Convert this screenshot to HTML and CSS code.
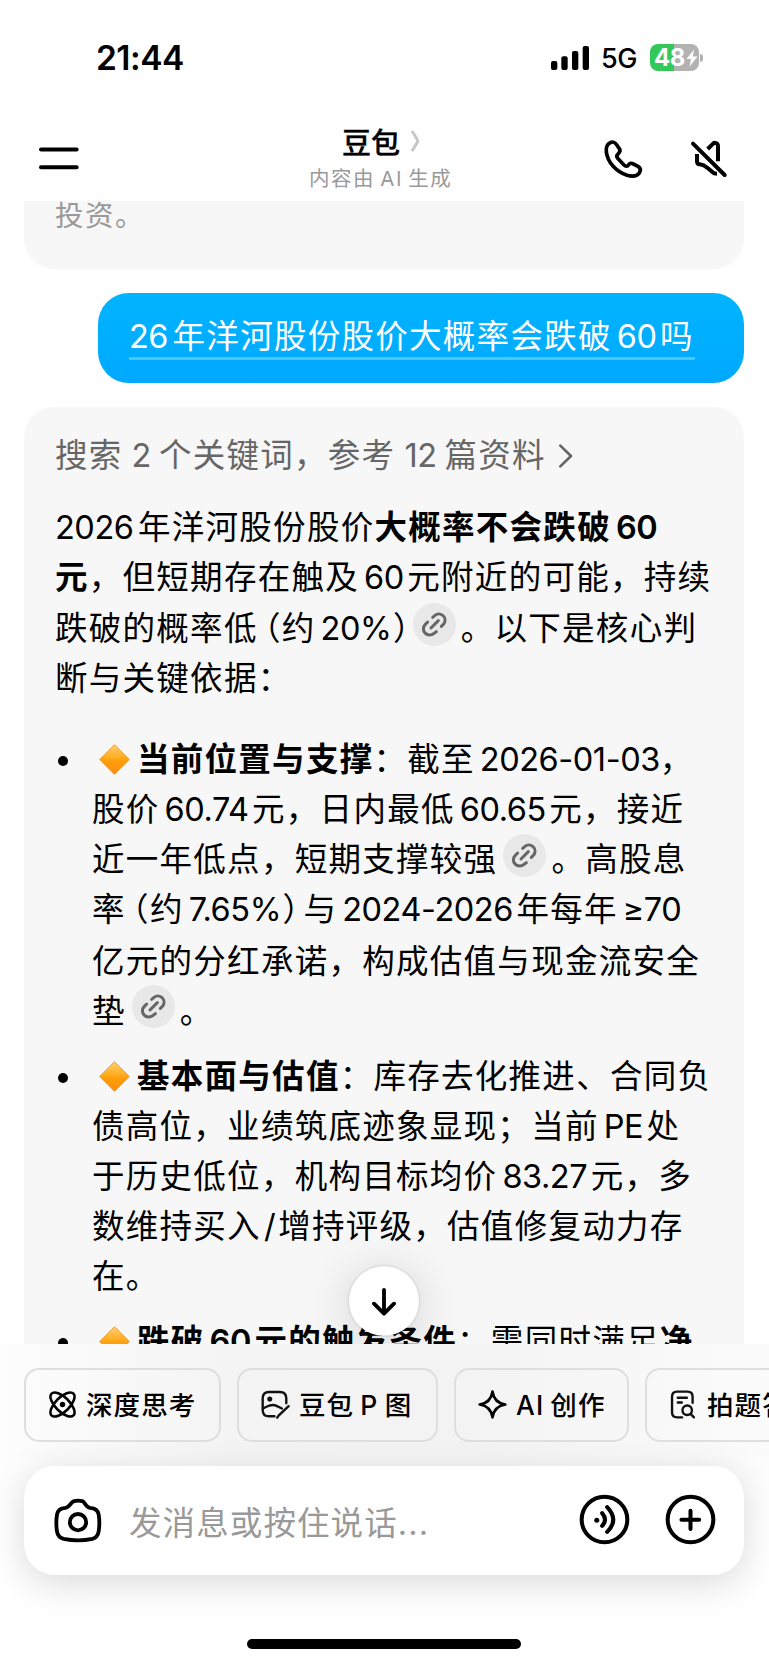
FILE: index.html
```html
<!DOCTYPE html>
<html lang="zh-CN">
<head>
<meta charset="utf-8">
<title>豆包</title>
<link rel="stylesheet" href="styles.css">
</head>
<body>
<svg class="defs" width="0" height="0" aria-hidden="true">
  <defs>
    <linearGradient id="amber" x1="0" y1="0" x2="0" y2="1">
      <stop offset="0" stop-color="#ffd071"/><stop offset=".45" stop-color="#ffab1e"/><stop offset=".55" stop-color="#ff9f0a"/><stop offset="1" stop-color="#ff8a0c"/>
    </linearGradient>
    <symbol id="diamond" viewBox="0 0 92 92"><path d="M46 2 90 46 46 90 2 46Z" fill="url(#amber)" stroke="#e8912a" stroke-width="2.5" stroke-linejoin="round"/></symbol>
    <symbol id="link" viewBox="0 0 129 129">
      <g fill="none" stroke="#666" stroke-width="9" stroke-linecap="round">
        <path d="M54 75 76 53"/>
        <path d="M59 43 66 37A18.500 18.500 0 0 1 92 63L85 70"/>
        <path d="M44 57 37 64A18.500 18.500 0 0 0 63 91L70 86"/>
      </g>
    </symbol>
  </defs>
</svg>
<div class="screen">
  <header class="top">
    <div class="status">
      <span class="time">21:44</span>
      <div class="signals">
        <svg class="bars" viewBox="0 0 114 72"><rect x="0" y="45" width="19" height="27" rx="6"/><rect x="31" y="31" width="19" height="41" rx="6"/><rect x="63" y="15" width="19" height="57" rx="6"/><rect x="95" y="0" width="19" height="72" rx="6"/></svg>
        <span class="net">5G</span>
        <div class="battery"><span>48</span><svg viewBox="0 0 34 50"><path d="M23 1 1 28H14L10 49 33 21H19Z" fill="#fff"/></svg></div>
        <i class="nub"></i>
      </div>
    </div>
    <nav class="nav">
      <svg class="menu" viewBox="0 0 119 68"><path d="M6 7H112M6 60H112" stroke="#000" stroke-width="12" stroke-linecap="round"/></svg>
      <div class="title">
        <div class="name">豆包<svg class="tchev" viewBox="0 0 28 66"><path d="M5 5 Q6 6 19 28Q22 33 19 38L5 61" fill="none" stroke="#c8c8c8" stroke-width="9.500" stroke-linecap="round"/></svg></div>
        <div class="sub">内容由 AI 生成</div>
      </div>
      <svg class="call" viewBox="654 414 126 126"><path d="M676 428C683 424 691 428 695 434L703 446C708 453 704 457 700 461C694 466 694 470 698 475L717 495C722 500 727 500 731 494C735 488 739 489 745 492L759 499C767 504 767 512 763 519C756 529 741 530 726 526C694 515 668 488 664 456C662 441 666 433 676 428Z" fill="none" stroke="#000" stroke-width="11" stroke-linejoin="round"/></svg>
      <svg class="mute" viewBox="910 414 126 126"><g fill="none" stroke="#000" stroke-width="12"><path d="M925 431 1020 525" stroke-linecap="round"/><path d="M969 447 983 433C990 425 1000 429 1000 438V484"/><path d="M937 462V484C937 490 940 493 945 493C957 494 963 499 969 504L984 517C988 521 992 521 997 521"/></g></svg>
    </nav>
  </header>

  <main class="chat">
    <section class="card previous"><p class="line">投资。</p></section>
    <div class="bubble"><p class="line"><b class="n">26</b>年洋河股份股价大概率会跌破<b class="n l">60</b>吗</p></div>
    <section class="card answer">
      <p class="line refs">搜索<b class="n r">2</b>个关键词，参考<b class="n r">12</b>篇资料<svg class="chev" viewBox="0 0 42 70"><path d="M4 4 36 35 4 66" fill="none" stroke="#666" stroke-width="8" stroke-linecap="round" stroke-linejoin="round"/></svg></p>
      <div class="para">
        <p class="line"><b class="n">2026</b>年洋河股份股价<strong>大概率不会跌破<b class="n l">60</b></strong></p>
        <p class="line"><strong>元</strong>，但短期存在触及<b class="n l">60</b>元附近的可能，持续</p>
        <p class="line drop">跌破的概率低<i class="po">（</i>约<b class="n l">20%</b><i class="pc">）</i><svg class="chip"><use href="#link"/></svg>。以下是核心判</p>
        <p class="line">断与关键依据：</p>
      </div>
      <ul class="points">
        <li>
          <p class="line"><svg class="gem"><use href="#diamond"/></svg><strong>当前位置与支撑</strong>：截至<b class="n l tight">2026-01-03</b>，</p>
          <p class="line">股价<b class="n l">60.74</b>元，日内最低<b class="n l">60.65</b>元，接近</p>
          <p class="line">近一年低点，短期支撑较强<svg class="chip"><use href="#link"/></svg>。高股息</p>
          <p class="line">率<i class="po">（</i>约<b class="n l">7.65%</b><i class="pc">）</i>与<b class="n l">2024-2026</b>年每年<b class="n l">≥70</b></p>
          <p class="line gap">亿元的分红承诺，构成估值与现金流安全</p>
          <p class="line last">垫<svg class="chip"><use href="#link"/></svg>。</p>
        </li>
        <li>
          <p class="line"><svg class="gem"><use href="#diamond"/></svg><strong>基本面与估值</strong>：库存去化推进、合同负</p>
          <p class="line">债高位，业绩筑底迹象显现；当前<b class="n l">PE</b>处</p>
          <p class="line">于历史低位，机构目标均价<b class="n l">83.27</b>元，多</p>
          <p class="line">数维持买入<b class="n s">/</b>增持评级，估值修复动力存</p>
          <p class="line">在。</p>
        </li>
        <li>
          <p class="line"><svg class="gem"><use href="#diamond"/></svg><strong>跌破<b class="n l">60</b>元的触发条件</strong>：需同时满足<strong>净</strong></p>
        </li>
      </ul>
    </section>
    <button class="down" aria-label="回到底部"><svg viewBox="0 0 72 84"><path d="M36 6V76M6 47 36 77 66 47" fill="none" stroke="#000" stroke-width="11.500" stroke-linecap="round" stroke-linejoin="round"/></svg></button>
  </main>

  <footer class="bottom">
    <div class="tools">
      <div class="tool t1"><svg viewBox="145 152 86 86"><g fill="none" stroke="#000" stroke-width="7.500"><ellipse cx="188" cy="195" rx="46" ry="21" transform="rotate(45 188 195)"/><ellipse cx="188" cy="195" rx="46" ry="21" transform="rotate(-45 188 195)"/></g><circle cx="188" cy="195" r="8"/></svg>深度思考</div>
      <div class="tool t2"><svg viewBox="788 153 86 86"><g fill="none" stroke="#111" stroke-width="7" stroke-linecap="round"><path d="M863 192V178Q863 159 844 159H812Q793 159 793 178V212Q793 231 812 231H828"/><path d="M794 208C808 200 821 193 834 200L850 208"/><path d="M836 235 841 228 870 201"/></g><circle cx="814" cy="180" r="7.500" fill="#111"/></svg>豆包 P 图</div>
      <div class="tool t3"><svg viewBox="283 152 86 86"><path d="M326 157Q331 190 364 195Q331 200 326 233Q321 200 288 195Q321 190 326 157Z" fill="none" stroke="#000" stroke-width="8" stroke-linejoin="round"/></svg>AI 创作</div>
      <div class="tool t4"><svg viewBox="861 152 86 86"><g fill="none" stroke="#111" stroke-width="7" stroke-linecap="round"><path d="M931 190V172Q931 157 916 157H885Q870 157 870 172V218Q870 233 885 233H900"/><path d="M887 175H914M887 189H899"/><circle cx="915" cy="212" r="14"/><path d="M925 223 935 233"/></g></svg>拍题答疑</div>
    </div>
    <div class="composer">
      <svg class="camera" viewBox="160 470 150 140"><g fill="none" stroke="#000" stroke-width="11.500"><path d="M223 482Q235 479 248 482C257 485 257 500 271 502C287 503 295 510 297 522Q301 547 297 573C295 586 289 592 278 595Q235 604 192 595C180 592 174 586 172 573Q168 547 172 522C174 510 182 503 197 502C212 500 212 485 223 482Z"/><circle cx="235" cy="545" r="24.500"/></g></svg>
      <span class="hint">发消息或按住说话...</span>
      <svg class="round" viewBox="580 464 152 152"><g fill="none" stroke="#000" stroke-width="12" stroke-linecap="round"><circle cx="656" cy="540" r="68"/><path d="M649 521Q666 541 649 559M664 503Q700 541 664 577"/></g><circle cx="633" cy="542" r="7.500"/></svg>
      <svg class="round" viewBox="838 464 152 152"><g fill="none" stroke="#000" stroke-width="12" stroke-linecap="round"><circle cx="914" cy="540" r="68"/><path d="M887 541H940M914 514V568"/></g></svg>
    </div>
    <div class="home"></div>
  </footer>
</div>
</body>
</html>
```
FILE: styles.css
```css
* { box-sizing: border-box; margin: 0; padding: 0; }
body { background: #fff; color: #000; font-family: Inter, "Noto Sans CJK SC", sans-serif; }
svg { display: block; flex: none; }
.defs { position: absolute; }
.screen { width: 769px; height: 1665px; display: flex; flex-direction: column; overflow: hidden; }

.top { height: 201px; flex: none; background: #fff; position: relative; }
.status { height: 115px; display: flex; justify-content: space-between; padding: 0 66px 0 96px; align-items: center; }
.time { font-size: 33.500px; font-weight: 600; letter-spacing: -.5px; }
.signals { display: flex; align-items: center; }
.bars { width: 38px; height: 24px; }
.net { font-size: 27px; font-weight: 450; width: 37px; margin-left: 12px; margin-top: 2px; letter-spacing: -.5px; }
.battery { width: 49px; height: 27px; margin-left: 12px; border-radius: 8px; background: linear-gradient(90deg, #34c759 48%, #b2b2b2 48%); display: flex; align-items: center; padding-left: 4px; gap: 1px; color: #fff; font-size: 24px; font-weight: 700; letter-spacing: -.5px; }
.battery svg { width: 12px; height: 18px; }
.nub { width: 3px; height: 8px; margin-left: 1px; background: #b2b2b2; border-radius: 0 3px 3px 0; }

.nav { height: 86px; display: flex; padding: 0 38px 0 39px; }
.menu { width: 40px; height: 23px; margin-top: 32px; }
.title { width: 240px; margin-left: 192px; display: flex; flex-direction: column; }
.name { display: flex; align-items: center; height: 42px; margin-top: 5px; padding-left: 71px; font-size: 29px; font-weight: 500; -webkit-text-stroke: .3px #000; }
.tchev { width: 9px; height: 22px; margin: 0 0 0 11px; }
.sub { height: 30px; line-height: 30px; margin-top: 2px; padding-left: 38px; font-size: 20.500px; letter-spacing: 1.500px; word-spacing: -2px; color: #999; white-space: nowrap; }
.call { width: 42px; height: 42px; margin: 23px 0 0 92px; }
.mute { width: 42px; height: 42px; margin: 23px 0 0 43px; }

.chat { height: 1143px; flex: none; overflow: hidden; position: relative; padding: 0 25px 0 24px; }
.card { background: #f7f7f7; }
.line { height: 50px; line-height: 50px; font-size: 32.500px; letter-spacing: 1.280px; white-space: nowrap; display: flex; align-items: center; }
.line strong { font-weight: 600; display: flex; align-items: center; }
.line .n { font-weight: inherit; letter-spacing: -.45px; margin-right: 4.500px; }
.line .l { margin-left: 5px; margin-right: 3.500px; }
.line .r { margin: 0 8px 0 9px; }
.line .s { margin: 0 3px; }
.line .tight { margin-right: 0; }
.line i { font-style: normal; }
.po { margin-left: -9.700px; }
.pc { margin-left: -2px; margin-right: -13px; }
.previous { height: 68px; border-radius: 0 0 30px 30px; padding-left: 31px; color: #999; }
.previous .line { font-size: 28.500px; letter-spacing: 1.500px; height: 30px; line-height: 28px; }
.bubble { width: 646px; height: 90px; margin: 24px 0 24px auto; border-radius: 31px; background: linear-gradient(#00b4ff, #00a9ff); color: #fff; padding: 18px 0 0 31px; }
.bubble .line { width: 566px; border-bottom: 3px solid rgba(255,255,255,.3); height: 49px; padding-top: 5px; }
.answer { height: 960px; border-radius: 30px 30px 0 0; padding: 24px 0 0 31px; }
.refs { color: #666; }
.chev { width: 14px; height: 24px; margin-left: 13px; }
.para { margin-top: 22px; }
.drop { margin-top: 1px; }
.chip { width: 43px; height: 43px; border-radius: 50%; background: #e8e8e8; margin: -10px 5px 0 6px; }
.pc + .chip { margin-left: -1px; }
.points { list-style: none; margin-top: 31px; }
.points li { padding-left: 37px; position: relative; margin-bottom: 15px; }
.points li::before { content: ""; position: absolute; left: 3px; top: 21px; width: 10px; height: 10px; border-radius: 50%; background: #000; }
.gem { width: 31px; height: 31px; margin: -2px 7.500px 0 6.500px; }
.gap { margin-top: 2px; }
.last { height: 49px; line-height: 49px; margin-bottom: 16px; }
.down { position: absolute; left: 349px; top: 1065px; width: 70px; height: 70px; border: 0; border-radius: 50%; background: #fff; box-shadow: 0 0 3px rgba(0,0,0,.18), 0 6px 50px rgba(0,0,0,.16); display: grid; place-items: center; }
.down svg { width: 24px; height: 28px; margin-top: 2px; }

.bottom { height: 321px; flex: none; position: relative; padding: 24px 25px 0 24px; background: linear-gradient(rgba(255,255,255,0) 100px, #fff 180px), linear-gradient(90deg, #fdfdfd, #f4f4f4 30%, #f3f3f3 60%, #fbfbfb); overflow: hidden; }
.tools { display: flex; gap: 16px; height: 74px; width: 900px; }
.tool { border: 2px solid #dedede; border-radius: 15px; display: flex; align-items: center; padding: 0 0 4px 22px; font-size: 26.500px; font-weight: 500; letter-spacing: 1.100px; word-spacing: -2px; white-space: nowrap; }
.tool svg { width: 29px; height: 29px; margin: 3px 9px 0 0; }
.t1 { width: 197px; }
.t2 { width: 201px; }
.t3 { width: 175px; }
.t4 { width: 204px; }
.composer { margin-top: 24px; height: 109px; border-radius: 31px; background: #fff; box-shadow: 0 8px 36px rgba(0,0,0,.15); display: flex; align-items: center; padding-left: 29px; }
.camera { width: 50px; height: 47px; }
.hint { width: 450px; margin-left: 26px; font-size: 32.500px; letter-spacing: 1.100px; color: #999; white-space: nowrap; }
.round { width: 51px; height: 51px; margin-top: -2px; }
.round + .round { margin-left: 35px; }
.home { width: 274px; height: 10px; border-radius: 5px; background: #000; margin: 64px 0 0 223px; }
```
